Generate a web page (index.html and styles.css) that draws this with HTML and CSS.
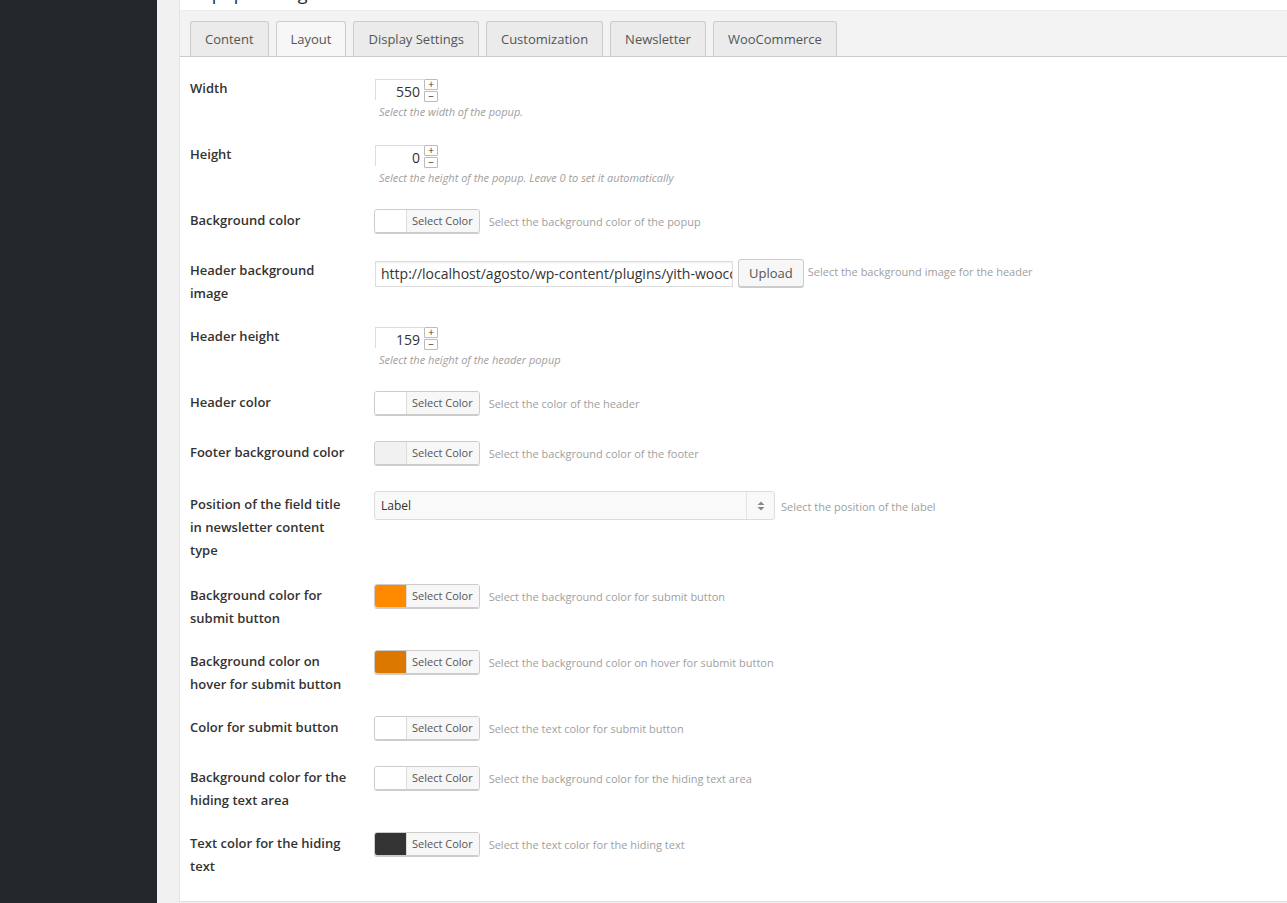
FILE: index.html
```html
<!DOCTYPE html>
<html>
<head>
  <title>Popup Settings</title>
  <link rel="stylesheet" href="styles.css">
</head>
<body>
  <div class="admin">
    <div class="sidebar"></div>
    <div class="main">
      <div class="panel">
        <h2 class="panel-title">Popup Settings</h2>
        <div class="tabs">
          <div class="tab">Content</div>
          <div class="tab active">Layout</div>
          <div class="tab">Display Settings</div>
          <div class="tab">Customization</div>
          <div class="tab">Newsletter</div>
          <div class="tab">WooCommerce</div>
        </div>
        <div class="form">
          <div class="row">
            <div class="label">Width</div>
            <div class="field stacked">
              <div class="spin">
                <div class="spin-input">550</div>
                <div class="spin-btns"><span>+</span><span>&minus;</span></div>
              </div>
              <div class="note">Select the width of the popup.</div>
            </div>
          </div>
          <div class="row">
            <div class="label">Height</div>
            <div class="field stacked">
              <div class="spin">
                <div class="spin-input">0</div>
                <div class="spin-btns"><span>+</span><span>&minus;</span></div>
              </div>
              <div class="note">Select the height of the popup. Leave 0 to set it automatically</div>
            </div>
          </div>
          <div class="row">
            <div class="label">Background color</div>
            <div class="field inline">
              <div class="picker"><span class="swatch"></span><span class="picker-btn">Select Color</span></div>
              <span class="desc">Select the background color of the popup</span>
            </div>
          </div>
          <div class="row">
            <div class="label">Header background image</div>
            <div class="field inline top">
              <div class="text-input">http://localhost/agosto/wp-content/plugins/yith-woocommerce-popup/assets/images/header.jpg</div>
              <div class="button">Upload</div>
              <span class="desc side">Select the background image for the header</span>
            </div>
          </div>
          <div class="row">
            <div class="label">Header height</div>
            <div class="field stacked">
              <div class="spin">
                <div class="spin-input">159</div>
                <div class="spin-btns"><span>+</span><span>&minus;</span></div>
              </div>
              <div class="note">Select the height of the header popup</div>
            </div>
          </div>
          <div class="row">
            <div class="label">Header color</div>
            <div class="field inline">
              <div class="picker"><span class="swatch"></span><span class="picker-btn">Select Color</span></div>
              <span class="desc">Select the color of the header</span>
            </div>
          </div>
          <div class="row">
            <div class="label">Footer background color</div>
            <div class="field inline">
              <div class="picker"><span class="swatch light"></span><span class="picker-btn">Select Color</span></div>
              <span class="desc">Select the background color of the footer</span>
            </div>
          </div>
          <div class="row tall">
            <div class="label">Position of the field title in newsletter content type</div>
            <div class="field inline">
              <div class="select">
                <span class="select-value">Label</span>
                <span class="select-arrow">
                  <svg width="8" height="10" viewBox="0 0 8 10"><path d="M4 0.5 L7.5 4 L0.5 4 Z M4 9.5 L7.5 6 L0.5 6 Z" fill="#888"/></svg>
                </span>
              </div>
              <span class="desc near">Select the position of the label</span>
            </div>
          </div>
          <div class="row">
            <div class="label">Background color for submit button</div>
            <div class="field inline">
              <div class="picker"><span class="swatch orange"></span><span class="picker-btn">Select Color</span></div>
              <span class="desc">Select the background color for submit button</span>
            </div>
          </div>
          <div class="row">
            <div class="label">Background color on hover for submit button</div>
            <div class="field inline">
              <div class="picker"><span class="swatch dark-orange"></span><span class="picker-btn">Select Color</span></div>
              <span class="desc">Select the background color on hover for submit button</span>
            </div>
          </div>
          <div class="row">
            <div class="label">Color for submit button</div>
            <div class="field inline">
              <div class="picker"><span class="swatch"></span><span class="picker-btn">Select Color</span></div>
              <span class="desc">Select the text color for submit button</span>
            </div>
          </div>
          <div class="row">
            <div class="label">Background color for the hiding text area</div>
            <div class="field inline">
              <div class="picker"><span class="swatch"></span><span class="picker-btn">Select Color</span></div>
              <span class="desc">Select the background color for the hiding text area</span>
            </div>
          </div>
          <div class="row">
            <div class="label">Text color for the hiding text</div>
            <div class="field inline">
              <div class="picker"><span class="swatch black"></span><span class="picker-btn">Select Color</span></div>
              <span class="desc">Select the text color for the hiding text</span>
            </div>
          </div>
        </div>
      </div>
    </div>
  </div>
</body>
</html>
```

FILE: styles.css
```css
html, body {
  margin: 0;
  padding: 0;
  height: 100%;
  overflow: hidden;
}

body {
  background-color: #f1f1f1;
  color: #23282d;
  font-family: "Open Sans", "Liberation Sans", sans-serif;
}

.admin {
  display: flex;
  min-height: 100%;
}

.sidebar {
  width: 157px;
  flex-shrink: 0;
  background-color: #23282d;
}

.main {
  flex: 1;
  padding-left: 23px;
}

.panel {
  background-color: #fff;
  border-left: 1px solid #e5e5e5;
  border-bottom: 1px solid #e1e1e1;
  margin-left: -1px;
}

.panel-title {
  margin: -17px 0 6px 10px;
  font-size: 18px;
  line-height: 21px;
  font-weight: 400;
  color: #23282d;
}

/* tabs */

.tabs {
  display: flex;
  gap: 7px;
  height: 35px;
  padding: 10px 0 0 10px;
  background-color: #f3f3f3;
  border-top: 1px solid #ebebeb;
  border-bottom: 1px solid #ccc;
}

.tab {
  padding: 0 14px;
  font-size: 13px;
  line-height: 34px;
  color: #555;
  background-color: #ebebeb;
  border: 1px solid #ccc;
  border-bottom: none;
  border-radius: 3px 3px 0 0;
}

.tab.active {
  background-color: #f7f7f7;
}

/* form rows */

.form {
  padding: 10px 0 13px 10px;
}

.row {
  display: flex;
  align-items: flex-start;
}

.row.tall {
  margin-top: 2px;
}

.label {
  width: 164px;
  margin-right: 20px;
  flex-shrink: 0;
  padding: 10px 0;
  font-size: 13px;
  font-weight: 600;
  line-height: 23px;
  color: #333;
}

.row.tall .label {
  padding-bottom: 12px;
}

.field {
  padding: 10px 0 16px;
}

.field.stacked {
  padding-bottom: 13px;
}

.field.inline {
  display: flex;
  align-items: center;
}

.field.inline.top {
  align-items: flex-start;
}

/* number spinner */

.spin {
  display: flex;
  margin: 2px 0 0 1px;
}

.spin-input {
  width: 49px;
  height: 21px;
  padding-right: 4px;
  text-align: right;
  font-size: 14px;
  line-height: 23px;
  color: #333;
  border-top: 1px solid #ddd;
  border-left: 1px solid #ddd;
  box-sizing: border-box;
}

.spin-btns {
  display: flex;
  flex-direction: column;
}

.spin-btns span {
  width: 12px;
  height: 9px;
  margin-bottom: 1px;
  border: 1px solid #bbb;
  border-radius: 1px;
  font-size: 10px;
  line-height: 8px;
  text-align: center;
  color: #333;
  background-color: #fff;
}

.note {
  margin: 1px 0 0 5px;
  font-size: 11px;
  font-style: italic;
  line-height: 16px;
  color: #a0a0a0;
}

/* color picker */

.picker {
  display: flex;
  height: 22px;
  border: 1px solid #ccc;
  border-radius: 3px;
  box-shadow: 0 1px 0 #ccc;
  overflow: hidden;
}

.swatch {
  width: 31px;
  background-color: #fff;
}

.swatch.light { background-color: #f1f1f1; }
.swatch.orange { background-color: #ff8a00; }
.swatch.dark-orange { background-color: #dc7700; }
.swatch.black { background-color: #333; }

.picker-btn {
  padding: 0 6px 0 5px;
  font-size: 11px;
  line-height: 22px;
  color: #555;
  background-color: #f7f7f7;
  border-left: 1px solid #ddd;
}

.desc {
  margin-left: 9px;
  font-size: 11px;
  color: #a0a0a0;
}

.desc.side {
  margin: 5px 0 0 4px;
  line-height: 16px;
}

.desc.near {
  margin-left: 6px;
}

/* text input and button */

.text-input {
  width: 346px;
  height: 24px;
  margin: 2px 0 0 1px;
  padding: 0 5px;
  border: 1px solid #ddd;
  box-shadow: inset 0 1px 2px rgba(0, 0, 0, 0.07);
  font-size: 14px;
  line-height: 24px;
  color: #333;
  white-space: nowrap;
  overflow: hidden;
}

.button {
  height: 26px;
  margin-left: 5px;
  padding: 0 10px;
  font-size: 13px;
  line-height: 26px;
  color: #555;
  background-color: #f7f7f7;
  border: 1px solid #ccc;
  border-radius: 3px;
  box-shadow: 0 1px 0 #ccc;
}

/* select */

.select {
  display: flex;
  justify-content: space-between;
  width: 399px;
  height: 27px;
  margin-top: -2px;
  background-color: #f9f9f9;
  border: 1px solid #ddd;
  border-radius: 3px;
}

.select-value {
  padding-left: 6px;
  font-size: 12px;
  line-height: 27px;
  color: #333;
}

.select-arrow {
  display: flex;
  align-items: center;
  justify-content: center;
  width: 27px;
  border-left: 1px solid #e5e5e5;
}
```
